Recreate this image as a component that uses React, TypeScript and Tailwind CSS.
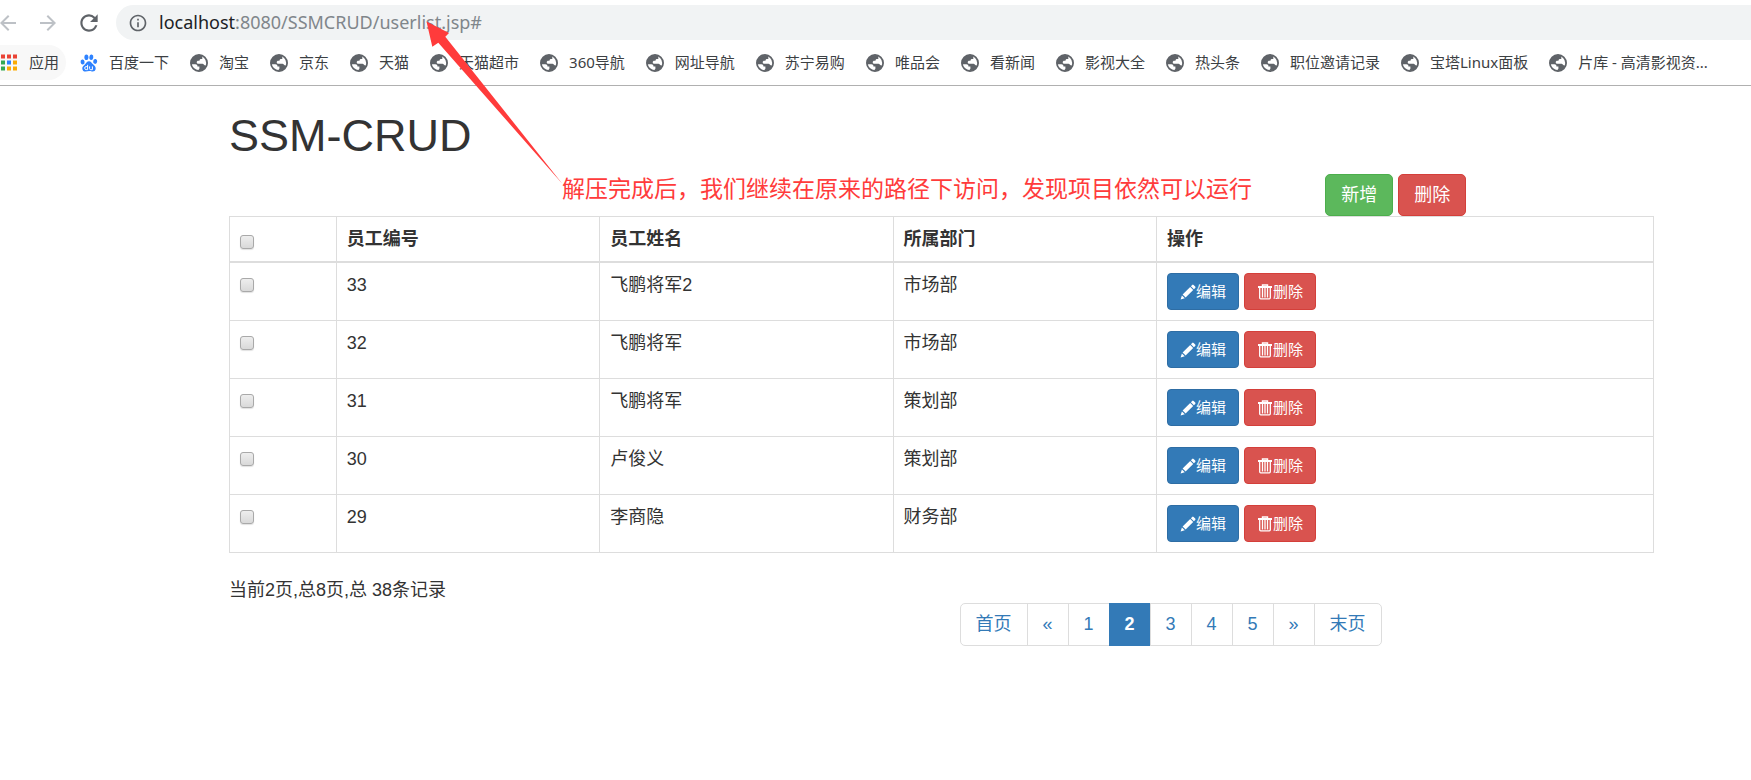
import { MdArrowBack, MdArrowForward, MdInfoOutline, MdRefresh } from 'react-icons/md';

const bookmarks = [
  '淘宝',
  '京东',
  '天猫',
  '天猫超市',
  '360导航',
  '网址导航',
  '苏宁易购',
  '唯品会',
  '看新闻',
  '影视大全',
  '热头条',
  '职位邀请记录',
  '宝塔Linux面板',
  '片库 - 高清影视资...',
];

const employees = [
  { id: 33, name: '飞鹏将军2', dept: '市场部' },
  { id: 32, name: '飞鹏将军', dept: '市场部' },
  { id: 31, name: '飞鹏将军', dept: '策划部' },
  { id: 30, name: '卢俊义', dept: '策划部' },
  { id: 29, name: '李商隐', dept: '财务部' },
];

const pages = ['首页', '«', '1', '2', '3', '4', '5', '»', '末页'];

const appColors = ['#ea4335', '#ea4335', '#ea4335', '#34a853', '#2e82ff', '#fbab05', '#34a853', '#fbab05', '#fbab05'];

function AppsIcon() {
  return (
    <svg width="17" height="17" viewBox="0 0 17 17">
      {appColors.map((c, i) => (
        <rect key={i} x={(i % 3) * 6 + 1} y={Math.floor(i / 3) * 6 + 0.5} width="4" height="4" fill={c} />
      ))}
    </svg>
  );
}

function BaiduIcon() {
  return (
    <svg width="18" height="18" viewBox="0 0 18 18" fill="#2e82ff">
      <ellipse cx="2.6" cy="8" rx="2" ry="2.5" transform="rotate(-12 2.6 8)" />
      <ellipse cx="6.4" cy="3.2" rx="2" ry="2.8" />
      <ellipse cx="11.3" cy="3.3" rx="2" ry="2.8" transform="rotate(10 11.3 3.3)" />
      <ellipse cx="15.2" cy="7.4" rx="2" ry="2.5" transform="rotate(10 15.2 7.4)" />
      <path d="M9 7.2c2 0 2.6 1.6 3.8 2.900 1.200 1.300 3.200 2.400 2.900 4.700-.3 2.300-2 2.900-3.700 2.700-1.300-.2-2-.4-3-.4s-2 .3-3.300.4c-1.700.1-3.200-.7-3.400-2.800-.2-2.200 1.600-3.300 2.800-4.500C6.300 8.900 7 7.200 9 7.200z" />
      <path d="M7.600 10.800v4.800H6.200a1.500 1.500 0 0 1 0-3h1.400M9.600 12.400v2.200c0 .8.4 1.100 1.200 1.100h1.600v-3.300" fill="none" stroke="#fff" strokeWidth="1" />
    </svg>
  );
}

function GlobeIcon() {
  return (
    <svg width="18" height="18" viewBox="0 0 18 18">
      <circle cx="9" cy="9" r="8.1" fill="#fff" stroke="#5f6368" strokeWidth="1.800" />
      <path
        fill="#5f6368"
        d="M9.500 1C5 1 1 4.500 1 9c0 .5 0 .8.1 1.200h4.300c1.200 0 2 .8 2 1.800v.6h2v2.200l-1.600 1.900c4 .8 8-1.600 9-5.500-1.300.7-2.300.3-2.800-.5-.6-1-1.500-.9-2.500-.9H8.300c-1 0-1.600-.7-1.600-1.500 0-1 .7-1.600 1.600-1.600h1.200c0-1.200.6-1.800 1.700-1.800h1.100V2.200z"
      />
    </svg>
  );
}

function PencilIcon() {
  return (
    <svg width="16" height="16" viewBox="0 0 16 16" fill="currentColor">
      <path d="M12.200.9a1 1 0 0 1 1.400 0l1.600 1.600a1 1 0 0 1 0 1.400l-1.300 1.300-3-3zM10.200 2.900l3 3-7.600 7.600-3-3zM1.900 11.400l2.900 2.900L.6 15.500z" />
    </svg>
  );
}

function TrashIcon() {
  return (
    <svg width="16" height="16" viewBox="0 0 16 16" fill="none" stroke="currentColor">
      <path d="M1 3h14" strokeWidth="2" />
      <path d="M5.500 2.500V1h5v1.500" strokeWidth="1.400" />
      <path d="M2.700 3.500v10.300a1 1 0 0 0 1 1h8.600a1 1 0 0 0 1-1V3.500M5.500 4v9.500M8 4v9.500M10.500 4v9.500" strokeWidth="1.300" />
    </svg>
  );
}

function Checkbox({ label, className }: { label: string; className: string }) {
  return (
    <input
      type="checkbox"
      aria-label={label}
      className={`block size-[14px] appearance-none rounded-[3px] border border-[#a9a9a9] bg-linear-to-b from-[#eeeeee] to-[#d9d9d9] shadow-[0_1px_1px_#e2e2e2] checked:bg-[#337ab7] ${className}`}
    />
  );
}

function BrowserBar() {
  return (
    <header className="border-b border-[#b0b0b0] bg-white pt-[5px] pb-[5px]">
      <div className="flex h-[35px] items-center">
        <div className="flex w-[116px] shrink-0 items-center gap-4 text-[#5f6368]">
          <button type="button" aria-label="后退" className="-ml-1 text-[#bdc1c6]">
            <MdArrowBack size={24} />
          </button>
          <button type="button" aria-label="前进" className="text-[#bdc1c6]">
            <MdArrowForward size={24} />
          </button>
          <button type="button" aria-label="刷新">
            <MdRefresh size={26} />
          </button>
        </div>
        <div className="flex h-full flex-1 items-center rounded-l-full bg-[#f1f3f4] pl-3 font-['Noto_Sans'] text-[18px]">
          <MdInfoOutline size={20} className="mr-[11px] text-[#5f6368]" />
          <label htmlFor="url" className="text-[#202124]">localhost</label>
          <input
            id="url"
            type="text"
            defaultValue=":8080/SSMCRUD/userlist.jsp#"
            className="min-w-0 flex-1 bg-transparent text-[#80868b] outline-none"
          />
        </div>
      </div>
      <nav className="mt-[5px] flex h-[35px] items-center overflow-hidden font-['Noto_Sans','Noto_Sans_CJK_SC',sans-serif] text-[15px] whitespace-nowrap text-[#3c4043]">
        <a href="#" className="mr-[14px] flex h-full items-center gap-3 rounded-r-full bg-[#f8f8f8] pr-[7px]">
          <AppsIcon />
          应用
        </a>
        <div className="flex items-center gap-[21px]">
          <a href="#" className="flex items-center gap-[11px]">
            <BaiduIcon />
            百度一下
          </a>
          {bookmarks.map((b) => (
            <a key={b} href="#" className="flex items-center gap-[11px]">
              <GlobeIcon />
              {b}
            </a>
          ))}
        </div>
      </nav>
    </header>
  );
}

function EmployeeTable() {
  return (
    <table className="w-full table-fixed border-collapse border border-[#dddddd] text-left">
      <colgroup>
        <col className="w-[7.5%]" />
        <col className="w-[18.5%]" />
        <col className="w-[20.6%]" />
        <col className="w-[18.5%]" />
        <col />
      </colgroup>
      <thead>
        <tr className="border-b-2 border-[#dddddd] align-top">
          <th className="border-x border-[#dddddd] px-[10px] pt-[10px] pb-[9px]">
            <Checkbox label="全选" className="mt-2" />
          </th>
          <th className="border-x border-[#dddddd] px-[10px] pt-[10px] pb-[9px]">员工编号</th>
          <th className="border-x border-[#dddddd] px-[10px] pt-[10px] pb-[9px]">员工姓名</th>
          <th className="border-x border-[#dddddd] px-[10px] pt-[10px] pb-[9px]">所属部门</th>
          <th className="border-x border-[#dddddd] px-[10px] pt-[10px] pb-[9px]">操作</th>
        </tr>
      </thead>
      <tbody>
        {employees.map((e) => (
          <tr key={e.id} className="align-top">
            <td className="border border-[#dddddd] p-[10px]">
              <Checkbox label={`选择 ${e.id}`} className="mt-[5px]" />
            </td>
            <td className="border border-[#dddddd] p-[10px]">{e.id}</td>
            <td className="border border-[#dddddd] p-[10px]">{e.name}</td>
            <td className="border border-[#dddddd] p-[10px]">{e.dept}</td>
            <td className="border border-[#dddddd] p-[10px]">
              <div className="flex gap-[5px] text-[15px] text-white">
                <button type="button" className="flex h-[37px] items-center rounded-[4px] border border-[#2e6da4] bg-[#337ab7] px-3">
                  <PencilIcon />
                  编辑
                </button>
                <button type="button" className="flex h-[37px] items-center rounded-[4px] border border-[#d43f3a] bg-[#d9534f] px-3">
                  <TrashIcon />
                  删除
                </button>
              </div>
            </td>
          </tr>
        ))}
      </tbody>
    </table>
  );
}

function Pagination() {
  return (
    <ul className="flex text-[#337ab7]">
      {pages.map((p) => (
        <li key={p} className="group -ml-px first:ml-0">
          <a
            href="#"
            aria-current={p === '2' ? 'page' : undefined}
            className="block border border-[#dddddd] bg-white px-[15px] py-2 group-first:rounded-l-[5px] group-last:rounded-r-[5px] aria-[current=page]:border-[#337ab7] aria-[current=page]:bg-[#337ab7] aria-[current=page]:font-bold aria-[current=page]:text-white"
          >
            {p}
          </a>
        </li>
      ))}
    </ul>
  );
}

function Annotation() {
  return (
    <>
      <svg className="pointer-events-none absolute top-5 left-[425px]" width="140" height="166" viewBox="425 20 140 166" fill="#ff3b3b">
        <path d="M426.500 21.500 449 33l-3.700 3.700L562.500 184 438.300 42.700l-6 4z" />
      </svg>
      <p className="pointer-events-none absolute top-[174px] left-[562px] text-[23px] leading-[30px] whitespace-nowrap text-[#ff3b3b]">
        解压完成后，我们继续在原来的路径下访问，发现项目依然可以运行
      </p>
    </>
  );
}

export default function App() {
  return (
    <div className="relative min-h-screen bg-white font-['Liberation_Sans','Noto_Sans_CJK_SC',sans-serif] text-[18px] leading-[25px] text-[#333333]">
      <BrowserBar />
      <main className="pr-[97px] pl-[229px]">
        <h1 className="pt-[25px] pb-[13px] text-[45px] leading-[50px]">SSM-CRUD</h1>
        <div className="-mx-[19px]">
          <div className="ml-[75%] flex gap-[5px] pl-[18px] text-white">
            <button type="button" className="rounded-[5px] border border-[#4cae4c] bg-[#5cb85c] px-[15px] py-2 leading-[24px]">
              新增
            </button>
            <button type="button" className="rounded-[5px] border border-[#d43f3a] bg-[#d9534f] px-[15px] py-2 leading-[24px]">
              删除
            </button>
          </div>
        </div>
        <EmployeeTable />
        <p className="mt-[25px]">当前2页,总8页,总 38条记录</p>
        <nav aria-label="分页" className="-mx-[19px]">
          <div className="ml-[50%] pl-[18px]">
            <Pagination />
          </div>
        </nav>
      </main>
      <Annotation />
    </div>
  );
}
